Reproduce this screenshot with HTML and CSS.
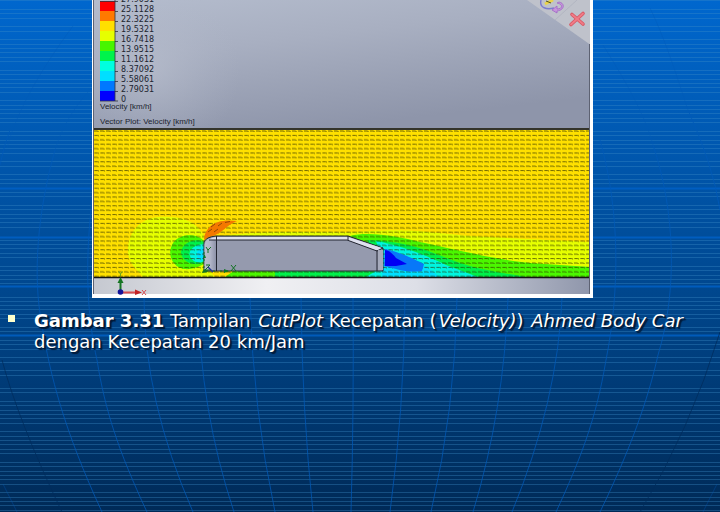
FILE: index.html
```
<!DOCTYPE html>
<html lang="id">
<head>
<meta charset="utf-8">
<meta name="viewport" content="width=device-width, initial-scale=1">
<title>Gambar 3.31</title>
<link rel="stylesheet" href="styles.css">
</head>
<body>
<svg class="backdrop" viewBox="0 0 720 512" preserveAspectRatio="none" aria-hidden="true">
  <defs>
    <linearGradient id="sky" x1="0" y1="0" x2="0" y2="1">
      <stop offset="0" stop-color="#0067ce"/>
      <stop offset=".3" stop-color="#0057ae"/>
      <stop offset=".6" stop-color="#00458a"/>
      <stop offset="1" stop-color="#002a57"/>
    </linearGradient>
  </defs>
  <rect width="720" height="512" fill="url(#sky)"/>
  <path class="scan" d="M0 .5H720M0 9.5H720M0 13.5H720M0 18.5H720M0 26.5H720M0 31.5H720M0 39.5H720M0 44.5H720M0 48.5H720M0 52.5H720M0 57.5H720M0 61.5H720M0 70.5H720M0 74.5H720M0 79.5H720M0 83.5H720M0 87.5H720M0 92.5H720M0 100.5H720M0 105.5H720M0 109.5H720M0 113.5H720M0 118.5H720M0 122.5H720M0 131.5H720M0 135.5H720M0 140.5H720M0 144.5H720M0 148.5H720M0 153.5H720M0 161.5H720M0 166.5H720M0 174.5H720M0 179.5H720M0 183.5H720M0 192.5H720M0 196.5H720M0 205.5H720M0 209.5H720M0 214.5H720M0 218.5H720M0 222.5H720M0 227.5H720M0 240.5H720M0 244.5H720M0 248.5H720M0 253.5H720M0 257.5H720M0 266.5H720M0 270.5H720M0 275.5H720M0 279.5H720M0 283.5H720M0 297.5H720M0 301.5H720M0 305.5H720M0 309.5H720M0 314.5H720M0 318.5H720M0 327.5H720M0 331.5H720M0 340.5H720M0 344.5H720M0 349.5H720M0 357.5H720M0 362.5H720M0 370.5H720M0 375.5H720M0 388.5H720M0 392.5H720M0 401.5H720M0 405.5H720M0 410.5H720M0 414.5H720M0 418.5H720M0 423.5H720M0 431.5H720M0 436.5H720M0 440.5H720M0 444.5H720M0 449.5H720M0 453.5H720M0 462.5H720M0 466.5H720M0 471.5H720M0 475.5H720M0 479.5H720M0 484.5H720M0 492.5H720M0 497.5H720M0 501.5H720M0 505.5H720M0 510.5H720"/>
  <path class="parallel" d="M0 188.5H720M0 237.5H720M0 286.5H720M0 335.5H720"/>
  <path class="meridian faint" d="M73 26C50 57 18 105 7 148M88 92C72 110 61 130 55 150M603 45C625 80 645 115 653 145M650 8C668 45 681 90 688 110"/>
  <path class="meridian" d="M10 130Q4 145 0 165M55 150C38 210 32 275 42 325C50 375 64 430 102 512M92 200C84 270 88 320 97 360C105 410 118 450 147 512M144 298Q144 400 193 512M198 298Q200 410 234 512M250 298Q253 410 275 512M301 298Q302 410 313 512M353 298Q354 410 351 512M405 298Q404 410 390 512M457 298Q455 410 431 512M508 298Q504 410 473 512M562 298Q558 400 512 512M600 140C620 210 620 290 606 360C596 420 580 460 556 512M653 145C675 210 678 290 658 355C648 400 630 450 600 512M688 110Q713 165 720 210"/>
  <path class="meridian dark" d="M2 360Q18 420 62 512M720 332Q690 430 640 512"/>
  <path class="meridian faint" d="M3 484L17 512M717 484L703 512"/>
</svg>

<main class="slide">
  <figure class="figure">
    <svg class="plot" viewBox="92 0 501 298" role="img" aria-label="Velocity cut plot">
      <defs>
        <linearGradient id="upper" x1="0" y1="0" x2=".45" y2="1">
          <stop offset="0" stop-color="#b4bccd"/>
          <stop offset=".4" stop-color="#a8afc1"/>
          <stop offset="1" stop-color="#8e95aa"/>
        </linearGradient>
        <radialGradient id="glow" gradientUnits="userSpaceOnUse" cx="150" cy="70" r="90">
          <stop offset="0" stop-color="#bdc3d1" stop-opacity=".55"/>
          <stop offset="1" stop-color="#b0b7c8" stop-opacity="0"/>
        </radialGradient>
        <linearGradient id="floor" x1="0" y1="0" x2="1" y2="0">
          <stop offset="0" stop-color="#c5c8d0"/>
          <stop offset=".35" stop-color="#f0f0f3"/>
          <stop offset=".65" stop-color="#dddfe7"/>
          <stop offset="1" stop-color="#8f96ab"/>
        </linearGradient>
        <linearGradient id="nose" x1="0" y1="0" x2="1" y2="0">
          <stop offset="0" stop-color="#b9bfcd"/>
          <stop offset=".5" stop-color="#b1b5c8"/>
          <stop offset="1" stop-color="#8d92a8"/>
        </linearGradient>
        <pattern id="arrows" patternUnits="userSpaceOnUse" x="94" y="129" width="12" height="8.8">
          <path d="M0 2H3L4.600 2.500M6 2H9L10.600 2.500M.4 6.400H3.400L5 6.900M6.400 6.400H9.400L11 6.900" fill="none" stroke="#2a2c00" stroke-width=".9" stroke-opacity=".75"/>
        </pattern>
        <clipPath id="flow"><rect x="94" y="129" width="496" height="148"/></clipPath>
      </defs>
      <rect x="92" y="0" width="501" height="298" fill="#fff"/>
      <rect x="93" y="0" width="497" height="129" fill="url(#upper)"/>
      <rect x="93" y="0" width="200" height="129" fill="url(#glow)"/>
      <path d="M527 0H590V44.500Z" fill="#bfc2cb"/>
      <path d="M555 20L577 0" stroke="#aeb2bf" stroke-width=".8"/>
      <path d="M541 0C539 8 547 10 554 8" fill="none" stroke="#7b7bd0" stroke-width="1.400"/>
      <path d="M545 4L553 0" stroke="#ead34a" stroke-width="3"/>
      <path d="M546 1L551 3" stroke="#55531f" stroke-width="1"/>
      <path d="M557 3C563 4 563 9 557 9V6L552 10L557 13V11C565 10 565 3 559 2Z" fill="#c794dc" stroke="#a066c5" stroke-width=".8"/>
      <path d="M572 14.500L583 24M583 13.500L571 24.500" fill="none" stroke="#d75663" stroke-width="3.600" stroke-linecap="round"/>
      <path d="M572 14.500L583 24M583 13.500L571 24.500" fill="none" stroke="#f07b86" stroke-width="1.800" stroke-linecap="round"/>

      <g clip-path="url(#flow)">
        <rect x="94" y="129" width="496" height="148" fill="#ffe000"/>
        <path d="M204 236C195 219 178 216 158 217C139 219 128 233 128 251C128 263 138 271 143 277H215L204 265ZM210 238C260 228 330 234 360 232C410 228 420 232 470 236L590 242V277H380V236Z" fill="#e6ff00"/>
        <path d="M204 241C197 233 180 233 173 243C166 255 173 267 184 269C193 270 200 266 204 264ZM350 236C370 231 399 237 420 242C470 253 500 260 530 263L590 267V277H225L235 270H384Z" fill="#4bf700"/>
        <path d="M204 242C194 237 182 244 181 252C181 260 192 268 204 262ZM367 240C410 241 430 252 460 263C485 271 505 273 526 277H275V270H384Z" fill="#00f04b"/>
        <path d="M204 244C193 245 188 251 190 256C192 262 199 264 204 261ZM376 241C406 247 425 255 446 265L478 277H366L384 266Z" fill="#00f5df"/>
        <path d="M204 247Q194 250 198 259L204 260ZM384 249C402 252 423 262 439 277H382Z" fill="#00dfff"/>
        <rect x="94" y="129" width="496" height="148" fill="url(#arrows)"/>
        <path d="M385 249C400 252 416 260 424 264L422 271C406 273 397 269 384 266Z" fill="#0878f8"/>
        <path d="M385 250Q390 250 396 258L407 264L396 266H385Z" fill="#0000f5"/>
        <path d="M204 240C205 227 215 218 237 221C225 226 221 235 209 237Z" fill="#f37800"/>
        <path d="M208 232L212 229M214 232L218 229M211 227L215 224M218 226L222 223M225 222.500L230 221.500" stroke="#7c3c00" stroke-width=".8"/>
      </g>
      <path d="M93 129H590" stroke="#34342b" stroke-width="2"/>
      <rect x="93" y="278" width="497" height="16" fill="url(#floor)"/>
      <path d="M93 277.500H590" stroke="#151515" stroke-width="1.500"/>
      <path d="M93.500 0V294M589.500 44V294" stroke="#5d6272" stroke-width="1"/>

      <path d="M204 271V242Q206 237 216 236H348L383 248V271Z" fill="#959aae" stroke="#252832" stroke-width="1"/>
      <path d="M204.500 270V244Q206 238 216 237V270Z" fill="url(#nose)"/>
      <path d="M209 240Q212 237 217 237H348L382 248L377 251L347 240Z" fill="#dfe1ef"/>
      <path d="M209 240H347L377 251L383 248M377 250V271M348 236V240M216.500 236V271" fill="none" stroke="#222531" stroke-width="1"/>
      <rect x="378" y="250" width="5" height="20" fill="#a6aabb"/>

      <g fill="none" stroke="#127323" stroke-width="1">
        <path d="M206 247L208 250L211 247M208 250V253M231 265L236 271M236 265L231 271M206 265H210L205 270H211"/>
        <path d="M204 252V271H228" stroke-dasharray="2 5"/>
      </g>
      <path d="M202 273L204 269L208 272ZM203 258L204.500 254L206 258ZM224 269L229 271L224 273Z" fill="#117624"/>
      <path d="M208 267L213 272" stroke="#223493" stroke-width="1.200"/>
      <path d="M120.500 292V280" stroke="#167523" stroke-width="2"/>
      <path d="M117.500 283L120.500 277L123.500 283Z" fill="#167523"/>
      <path d="M118.500 271.500L120.500 274L122.500 271.500M120.500 274V276" fill="none" stroke="#479d20" stroke-width=".8"/>
      <path d="M121 292.500H137" stroke="#d64c50" stroke-width="2"/>
      <path d="M135 289.500L142 292.500L135 295Z" fill="#c12326"/>
      <path d="M142 290L146 295M146 290L142 295" stroke="#d64c50" stroke-width="1"/>
      <circle cx="120.500" cy="292" r="2.800" fill="#13139a"/>

      <g>
        <rect x="100" y="1" width="15" height="10" fill="#ff0000"/>
        <rect x="100" y="11" width="15" height="10" fill="#ff7900"/>
        <rect x="100" y="21" width="15" height="10" fill="#ffdf00"/>
        <rect x="100" y="31" width="15" height="10" fill="#e6ff00"/>
        <rect x="100" y="41" width="15" height="10" fill="#48f500"/>
        <rect x="100" y="51" width="15" height="10" fill="#00f34b"/>
        <rect x="100" y="61" width="15" height="10" fill="#00ffe0"/>
        <rect x="100" y="71" width="15" height="10" fill="#00dfff"/>
        <rect x="100" y="81" width="15" height="10" fill="#0078ff"/>
        <rect x="100" y="91" width="15" height="10" fill="#0000ff"/>
        <path d="M100 1.500H118M115 11.500H118M115 21.500H118M115 31.500H118M115 41.500H118M115 51.500H118M115 61.500H118M115 71.500H118M115 81.500H118M115 91.500H118M100 101H118M115 0V101" stroke="#30343f" stroke-width=".8" fill="none"/>
      </g>
      <g class="scale">
        <text x="121" y="2">27.9031</text>
        <text x="121" y="12">25.1128</text>
        <text x="121" y="22">22.3225</text>
        <text x="121" y="32">19.5321</text>
        <text x="121" y="42">16.7418</text>
        <text x="121" y="52">13.9515</text>
        <text x="121" y="62">11.1612</text>
        <text x="121" y="72">8.37092</text>
        <text x="121" y="82">5.58061</text>
        <text x="121" y="92">2.79031</text>
        <text x="121" y="102">0</text>
      </g>
      <g class="note">
        <text x="100" y="109">Velocity [km/h]</text>
        <text x="100" y="124">Vector Plot: Velocity [km/h]</text>
      </g>
    </svg>
  </figure>
  <ul class="caption">
    <li><b>Gambar 3.31</b> Tampilan <i>CutPlot</i> Kecepatan (<i>Velocity)</i>) <i>Ahmed Body Car</i> dengan Kecepatan 20 km/Jam</li>
  </ul>
</main>
</body>
</html>
```

FILE: styles.css
```
* {
  box-sizing: border-box;
}

body {
  margin: 0;
  min-height: 100vh;
  background: #00458a;
  color: #fff;
  font-family: "DejaVu Sans", sans-serif;
}

.backdrop {
  position: absolute;
  inset: 0;
  width: 100%;
  height: 100%;
}

.scan,
.parallel,
.meridian {
  fill: none;
  stroke-width: 1;
}

.scan {
  stroke: #3c8cc8;
  stroke-opacity: 0.36;
}

.parallel {
  stroke: #0061c8;
  stroke-width: 2;
  stroke-opacity: 0.8;
}

.meridian {
  stroke: #0059b8;
  stroke-opacity: 0.75;
}

.meridian.faint {
  stroke-opacity: 0.35;
}

.meridian.dark {
  stroke: #002c5c;
}

.slide {
  position: relative;
  display: flex;
  flex-direction: column;
  gap: 12px;
}

.figure {
  margin: 0 35px 0 92px;
}

.plot {
  display: block;
  width: 100%;
  max-width: 501px;
  height: auto;
}

.scale,
.note {
  fill: #20242f;
  font-size: 8px;
}

.scale {
  font-family: "DejaVu Sans", sans-serif;
}

.note {
  font-family: "Liberation Sans", sans-serif;
}

.caption {
  margin: 0;
  padding: 0 24px 0 8px;
  list-style: none;
  font-size: 18px;
  line-height: 21px;
  text-shadow: 1px 1px 1px #001a38, 2px 2px 1px #001a38;
}

.caption i {
  margin-left: 2px;
}

.caption li {
  display: flow-root;
  padding-left: 26px;
}

.caption li::before {
  content: "";
  float: left;
  width: 7px;
  height: 7px;
  margin: 5px 0 0 -26px;
  background: #ffffcc;
}
```
